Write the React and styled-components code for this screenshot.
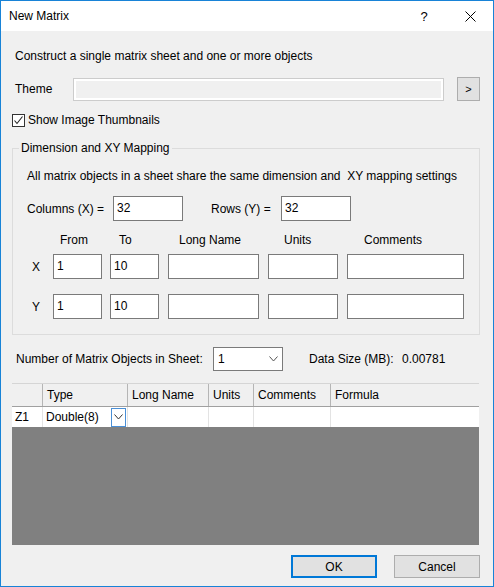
import React from 'react';
import styled, { createGlobalStyle } from 'styled-components';

const GlobalStyle = createGlobalStyle`
  html, body { margin: 0; padding: 0; background: #ffffff; }
  body {
    font-family: "Liberation Sans", Arial, sans-serif;
    font-size: 12px;
    color: #000;
  }
  *, *::before, *::after { box-sizing: border-box; }
`;

const Window = styled.div`
  width: 494px;
  height: 587px;
  border: 1px solid #1883d7;
  background: #f0f0f0;
  display: flex;
  flex-direction: column;
  overflow: hidden;
`;

const TitleBar = styled.div`
  height: 30px;
  flex: none;
  background: #ffffff;
  display: flex;
  align-items: center;
  padding-left: 8px;
`;

const Title = styled.div`
  flex: 1;
  font-size: 12px;
  line-height: 16px;
`;

const TitleButton = styled.div`
  width: 46px;
  height: 30px;
  display: flex;
  align-items: center;
  justify-content: center;
  font-size: 13px;
`;

const Body = styled.div`
  flex: 1;
  display: flex;
  flex-direction: column;
  padding: 17px 13px 8px 11px;
  min-height: 0;
`;

const Text = styled.div`
  line-height: 16px;
  white-space: nowrap;
  margin-left: ${p => p.$indent || 0}px;
  margin-top: ${p => p.$top || 0}px;
  width: ${p => (p.$w ? `${p.$w}px` : 'auto')};
  flex: none;
`;

const Row = styled.div`
  display: flex;
  align-items: center;
  height: ${p => p.$h || 16}px;
  margin-top: ${p => p.$top || 0}px;
  flex: none;
`;

const ThemeBox = styled.div`
  flex: 1;
  min-width: 0;
  height: 23px;
  border: 1px solid #cccccc;
  background: #f0f0f0;
  box-shadow: inset 0 0 0 2px #ffffff;
`;

const SmallButton = styled.div`
  width: 23px;
  height: 24px;
  margin-left: 13px;
  border: 1px solid #adadad;
  background: #e1e1e1;
  display: flex;
  align-items: center;
  justify-content: center;
  font-size: 11px;
  line-height: 1;
  flex: none;
`;

const CheckBox = styled.div`
  width: 13px;
  height: 13px;
  border: 1px solid #333333;
  background: #ffffff;
  display: flex;
  align-items: center;
  justify-content: center;
  margin-right: 3px;
  flex: none;
`;

const Group = styled.fieldset`
  margin: 12px 0 0 0;
  padding: 12px 14px 15px 14px;
  border: 1px solid #dcdcdc;
  min-width: 0;
`;

const Legend = styled.legend`
  padding: 0 2px;
  margin-left: -8px;
  line-height: 16px;
`;

const Field = styled.div`
  width: ${p => p.$w}px;
  height: 25px;
  border: 1px solid #7a7a7a;
  background: #ffffff;
  padding: 4px 0 0 3px;
  line-height: 14px;
  color: #000;
  flex: none;
`;

const MapGrid = styled.div`
  display: grid;
  grid-template-columns: 27px 57px 58px 100px 79px 117px;
  align-items: center;
  margin-top: ${p => p.$top || 0}px;
  margin-left: -14px;
  padding-left: 13px;
`;

const MapHead = styled.div`
  line-height: 16px;
  padding-left: ${p => p.$indent || 0}px;
  white-space: nowrap;
`;

const Combo = styled.div`
  width: 70px;
  height: 24px;
  border: 1px solid #7a7a7a;
  background: #ffffff;
  display: flex;
  align-items: flex-start;
  justify-content: space-between;
  padding: 4px 4px 0 4px;
  line-height: 14px;
  flex: none;
`;

const Chevron = styled.svg`
  margin-top: 4px;
  flex: none;
`;

const Table = styled.div`
  flex: 1;
  margin-top: 12px;
  margin-right: 1px;
  display: flex;
  flex-direction: column;
  background: #808080;
  min-height: 0;
`;

const TableRow = styled.div`
  display: grid;
  grid-template-columns: 31px 85px 81px 45px 77px 1fr;
  height: ${p => p.$h}px;
  background: ${p => (p.$head ? '#f0f0f0' : '#ffffff')};
  border-top: ${p => (p.$head ? '1px solid #d5d5d5' : 'none')};
  border-bottom: ${p => (p.$head ? '1px solid #a0a0a0' : 'none')};
  flex: none;
`;

const Cell = styled.div`
  display: flex;
  align-items: center;
  padding-left: ${p => (p.$head ? 4 : 3)}px;
  border-right: 1px solid ${p => (p.$head ? '#b5b5b5' : '#e3e3e3')};
  white-space: nowrap;
  justify-content: ${p => (p.$spread ? 'space-between' : 'flex-start')};
  padding-right: ${p => (p.$spread ? 1 : 0)}px;
  &:last-child { border-right: none; }
`;

const CellDrop = styled.div`
  width: 15px;
  height: 19px;
  border: 1px solid #4a8fd6;
  background: #ffffff;
  display: flex;
  align-items: center;
  justify-content: center;
`;

const Footer = styled.div`
  display: flex;
  justify-content: flex-end;
  gap: 17px;
  margin-top: 10px;
  flex: none;
`;

const Button = styled.div`
  width: 86px;
  height: 23px;
  border: ${p => (p.$primary ? '2px solid #0078d7' : '1px solid #adadad')};
  background: #e1e1e1;
  display: flex;
  align-items: center;
  justify-content: center;
  line-height: 16px;
`;

const ChevronIcon = ({ w = 9, h = 5, color = '#555' }) => (
  <Chevron width={w} height={h + 1} viewBox={`0 0 ${w} ${h + 1}`}>
    <polyline points={`0.5,0.5 ${w / 2},${h} ${w - 0.5},0.5`} fill="none" stroke={color} strokeWidth="1" />
  </Chevron>
);

export default function App() {
  const axes = ['X', 'Y'];
  const fieldWidths = [49, 49, 91, 70, 117];
  const heads = [
    ['From', 7],
    ['To', 9],
    ['Long Name', 11],
    ['Units', 16],
    ['Comments', 17],
  ];
  return (
    <>
      <GlobalStyle />
      <Window>
        <TitleBar>
          <Title>New Matrix</Title>
          <TitleButton>?</TitleButton>
          <TitleButton>
            <svg width="11" height="11" viewBox="0 0 11 11">
              <path d="M0.5 0.5 L10.5 10.5 M10.5 0.5 L0.5 10.5" stroke="#000" strokeWidth="1" />
            </svg>
          </TitleButton>
        </TitleBar>
        <Body>
          <Text $indent={3}>Construct a single matrix sheet and one or more objects</Text>
          <Row $h={24} $top={13}>
            <Text $indent={3} $w={58}>Theme</Text>
            <ThemeBox />
            <SmallButton>&gt;</SmallButton>
          </Row>
          <Row $h={16} $top={11}>
            <CheckBox>
              <svg width="11" height="11" viewBox="0 0 11 11">
                <polyline points="1.5,5.5 4,8.5 9.5,1.5" fill="none" stroke="#222" strokeWidth="1.1" />
              </svg>
            </CheckBox>
            <Text>Show Image Thumbnails</Text>
          </Row>
          <Group>
            <Legend>Dimension and XY Mapping</Legend>
            <Text>All matrix objects in a sheet share the same dimension and&nbsp; XY mapping settings</Text>
            <Row $h={25} $top={12}>
              <Text $w={86}>Columns (X) =</Text>
              <Field $w={70}>32</Field>
              <Text $indent={28} $w={70}>Rows (Y) =</Text>
              <Field $w={70}>32</Field>
            </Row>
            <MapGrid $top={11}>
              <span />
              {heads.map(([h, ind]) => (
                <MapHead key={h} $indent={ind}>{h}</MapHead>
              ))}
            </MapGrid>
            {axes.map((a, i) => (
              <MapGrid key={a} $top={i === 0 ? 6 : 15}>
                <MapHead $indent={6}>{a}</MapHead>
                {fieldWidths.map((w, j) => (
                  <Field key={j} $w={w}>{j === 0 ? '1' : j === 1 ? '10' : ''}</Field>
                ))}
              </MapGrid>
            ))}
          </Group>
          <Row $h={24} $top={12}>
            <Text $indent={4} $w={197}>Number of Matrix Objects in Sheet:</Text>
            <Combo>
              <span>1</span>
              <ChevronIcon />
            </Combo>
            <Text $indent={26} $w={93}>Data Size (MB):</Text>
            <Text>0.00781</Text>
          </Row>
          <Table>
            <TableRow $head $h={24}>
              <Cell $head />
              <Cell $head>Type</Cell>
              <Cell $head>Long Name</Cell>
              <Cell $head>Units</Cell>
              <Cell $head>Comments</Cell>
              <Cell $head>Formula</Cell>
            </TableRow>
            <TableRow $h={20}>
              <Cell>Z1</Cell>
              <Cell $spread>
                Double(8)
                <CellDrop>
                  <svg width="9" height="6" viewBox="0 0 9 6">
                    <polyline points="0.5,0.5 4.5,5 8.5,0.5" fill="none" stroke="#333" strokeWidth="1" />
                  </svg>
                </CellDrop>
              </Cell>
              <Cell />
              <Cell />
              <Cell />
              <Cell />
            </TableRow>
          </Table>
          <Footer>
            <Button $primary>OK</Button>
            <Button>Cancel</Button>
          </Footer>
        </Body>
      </Window>
    </>
  );
}
